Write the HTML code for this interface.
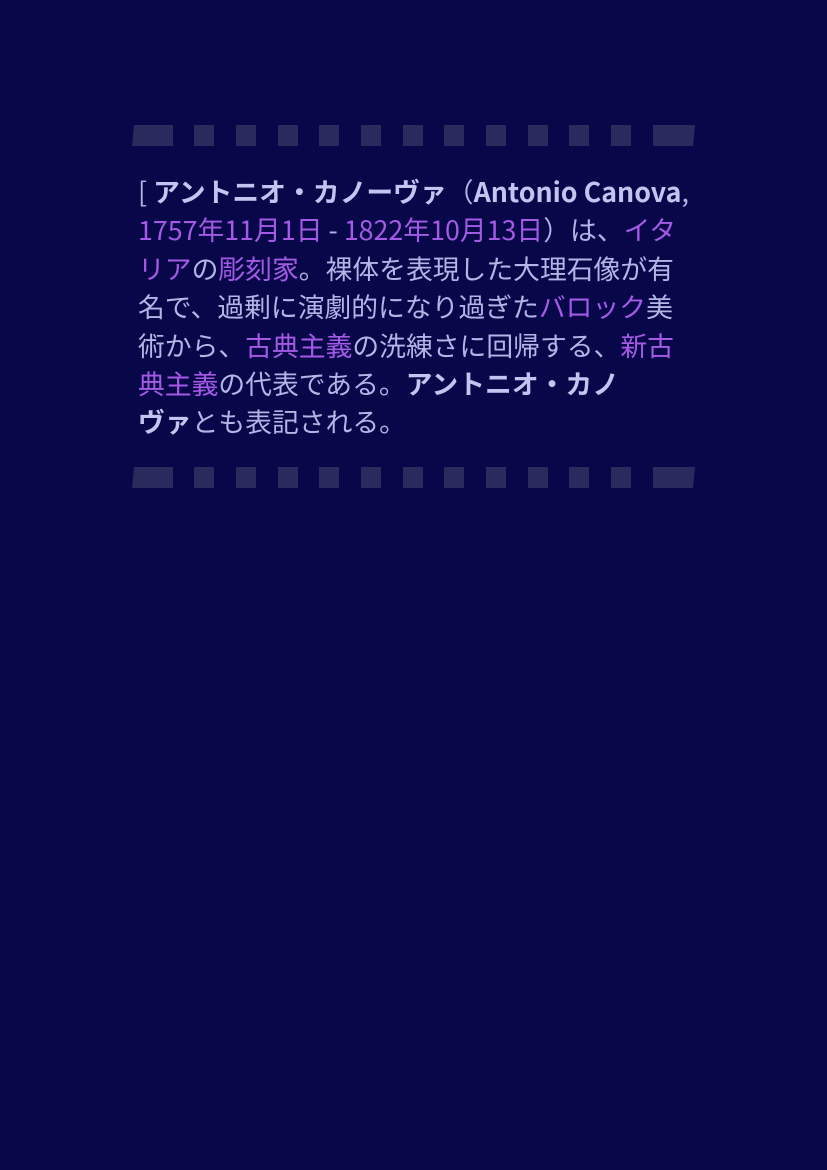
<!DOCTYPE html>
<html><head><meta charset="utf-8"><style>
html,body{margin:0;padding:0;background:#07074a;width:827px;height:1170px;overflow:hidden}
.bar{position:absolute;left:132px;width:563px;height:21px}
.bar div{position:absolute;top:0;height:21px;background:#2a2a5c}
.t{position:absolute;left:138px;top:172px;width:650px;font-family:"Noto Sans CJK JP",sans-serif;font-size:26.8px;line-height:38.4px;color:#b4b4e6;white-space:nowrap}
.t b{font-weight:700;color:#c4c4f0}
.l{color:#a55ae6}
</style></head><body>
<div class="bar" style="top:125px">
<div style="left:0px;width:41px;clip-path:polygon(2px 0,100% 0,100% 100%,0 100%)"></div>
<div style="left:62px;width:20px"></div><div style="left:104px;width:20px"></div><div style="left:146px;width:20px"></div><div style="left:187px;width:20px"></div><div style="left:229px;width:20px"></div><div style="left:271px;width:20px"></div><div style="left:312px;width:20px"></div><div style="left:354px;width:20px"></div><div style="left:396px;width:20px"></div><div style="left:437px;width:20px"></div><div style="left:479px;width:20px"></div>
<div style="left:521px;width:42px;clip-path:polygon(0 0,100% 0,calc(100% - 2px) 100%,0 100%)"></div>
</div>
<div class="t">[ <b>アントニオ・カノーヴァ</b>（<b>Antonio Canova</b>,<br>
<span class="l">1757年11月1日</span> - <span class="l">1822年10月13日</span>）は、<span class="l">イタ</span><br>
<span class="l">リア</span>の<span class="l">彫刻家</span>。裸体を表現した大理石像が有<br>
名で、過剰に演劇的になり過ぎた<span class="l">バロック</span>美<br>
術から、<span class="l">古典主義</span>の洗練さに回帰する、<span class="l">新古</span><br>
<span class="l">典主義</span>の代表である。<b>アントニオ・カノ</b><br>
<b>ヴァ</b>とも表記される。</div>
<div class="bar" style="top:467px">
<div style="left:0px;width:41px;clip-path:polygon(2px 0,100% 0,100% 100%,0 100%)"></div>
<div style="left:62px;width:20px"></div><div style="left:104px;width:20px"></div><div style="left:146px;width:20px"></div><div style="left:187px;width:20px"></div><div style="left:229px;width:20px"></div><div style="left:271px;width:20px"></div><div style="left:312px;width:20px"></div><div style="left:354px;width:20px"></div><div style="left:396px;width:20px"></div><div style="left:437px;width:20px"></div><div style="left:479px;width:20px"></div>
<div style="left:521px;width:42px;clip-path:polygon(0 0,100% 0,calc(100% - 2px) 100%,0 100%)"></div>
</div>
</body></html>
